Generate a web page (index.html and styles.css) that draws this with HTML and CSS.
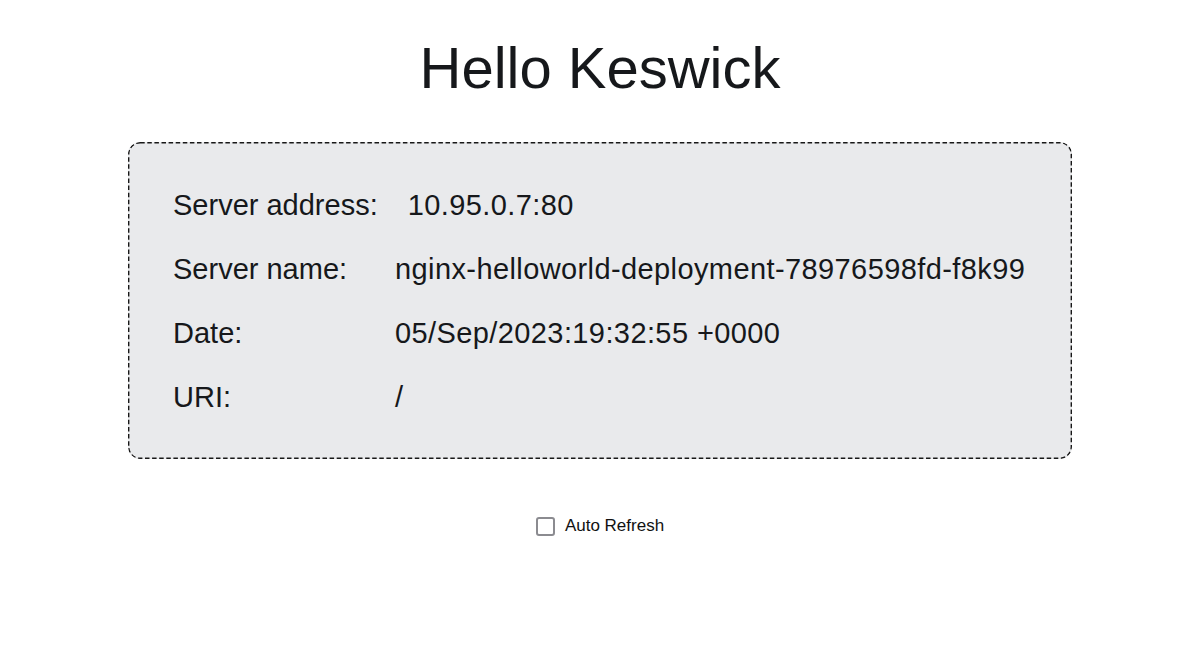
FILE: index.html
```html
<!DOCTYPE html>
<html>
<head>
<meta charset="utf-8">
<title>Hello Keswick</title>
<link rel="stylesheet" href="styles.css">
</head>
<body>
<h1 class="title">Hello Keswick</h1>
<div class="info">
  <div class="row"><span class="label">Server address:</span><span class="value">10.95.0.7:80</span></div>
  <div class="row"><span class="label">Server name:</span><span class="value">nginx-helloworld-deployment-78976598fd-f8k99</span></div>
  <div class="row"><span class="label">Date:</span><span class="value">05/Sep/2023:19:32:55 +0000</span></div>
  <div class="row"><span class="label">URI:</span><span class="value">/</span></div>
</div>
<div class="footer">
  <label class="refresh"><span class="box"></span><span class="refresh-text">Auto Refresh</span></label>
</div>
</body>
</html>
```
FILE: styles.css
```css
html, body {
  margin: 0;
  padding: 0;
  background: #ffffff;
}
body {
  font-family: "Liberation Sans", Arial, Helvetica, sans-serif;
  color: #16181b;
  font-size: 29px;
  padding-top: 39px;
}
.title {
  margin: 0;
  font-size: 58px;
  font-weight: 400;
  line-height: 58px;
  text-align: center;
  color: #16181b;
}
.info {
  box-sizing: border-box;
  width: 944px;
  height: 317px;
  margin: 45px auto 0;
  padding: 31px 45px 29px;
  border-radius: 12px;
  background-color: #e9eaec;
  background-image: url("data:image/svg+xml,%3Csvg xmlns='http://www.w3.org/2000/svg' width='944' height='317'%3E%3Crect x='0.7' y='0.7' width='942.6' height='315.6' rx='11.5' ry='11.5' fill='none' stroke='%23181818' stroke-width='1.4' stroke-dasharray='4.5 2.6'/%3E%3C/svg%3E");
  background-repeat: no-repeat;
}
.row {
  display: flex;
  line-height: 64px;
  height: 64px;
}
.label {
  box-sizing: border-box;
  min-width: 222px;
  padding-right: 30px;
  white-space: nowrap;
}
.value {
  white-space: nowrap;
  letter-spacing: 0.4px;
}
.footer {
  display: flex;
  justify-content: center;
  margin-top: 57px;
}
.refresh {
  display: flex;
  align-items: center;
  gap: 10px;
  font-size: 17px;
  color: #111;
}
.box {
  box-sizing: border-box;
  width: 19px;
  height: 19px;
  border: 2px solid #8b8b90;
  border-radius: 3px;
  background: #fff;
}
```
